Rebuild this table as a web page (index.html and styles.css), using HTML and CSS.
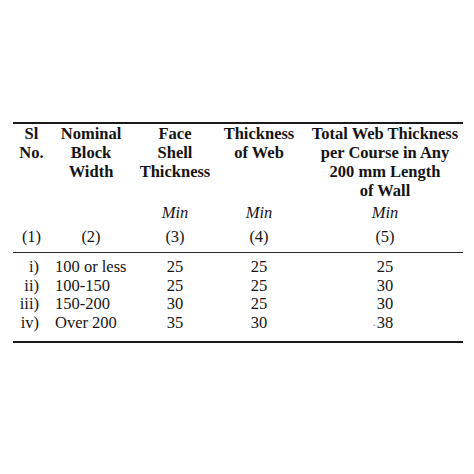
FILE: index.html
```html
<!DOCTYPE html>
<html lang="en">
<head>
<meta charset="utf-8">
<title>Block dimensions</title>
<link rel="stylesheet" href="styles.css">
</head>
<body>
<table class="spec">
  <colgroup>
    <col class="c1"><col class="c2"><col class="c3"><col class="c4"><col class="c5">
  </colgroup>
  <thead>
    <tr class="head">
      <th>Sl<br>No.</th>
      <th>Nominal<br>Block<br>Width</th>
      <th>Face<br>Shell<br>Thickness</th>
      <th>Thickness<br>of Web</th>
      <th class="last">Total Web Thickness<br>per Course in Any<br>200 mm Length<br>of Wall</th>
    </tr>
    <tr class="min">
      <td></td>
      <td></td>
      <td>Min</td>
      <td>Min</td>
      <td class="last">Min</td>
    </tr>
    <tr class="nums">
      <td>(1)</td>
      <td>(2)</td>
      <td>(3)</td>
      <td>(4)</td>
      <td class="last">(5)</td>
    </tr>
  </thead>
  <tbody>
    <tr class="first">
      <td class="sl">i)</td><td class="width">100 or less</td><td>25</td><td>25</td><td class="last">25</td>
    </tr>
    <tr>
      <td class="sl">ii)</td><td class="width">100-150</td><td>25</td><td>25</td><td class="last">30</td>
    </tr>
    <tr>
      <td class="sl">iii)</td><td class="width">150-200</td><td>30</td><td>25</td><td class="last">30</td>
    </tr>
    <tr class="final">
      <td class="sl">iv)</td><td class="width">Over 200</td><td>35</td><td>30</td><td class="last"><span class="val">38<span class="speck">.</span></span></td>
    </tr>
  </tbody>
</table>
</body>
</html>
```

FILE: styles.css
```css
html, body {
  margin: 0;
  padding: 0;
  background: #ffffff;
}

body {
  font-family: "Liberation Serif", "Times New Roman", serif;
  font-size: 16.5px;
  color: #141414;
}

.spec {
  margin: 122px 0 0 13px;
  width: 450px;
  table-layout: fixed;
  border-collapse: separate;
  border-spacing: 0;
  border-top: 2px solid #1a1a1a;
  border-bottom: 2px solid #1a1a1a;
}

.c1 { width: 37px; }
.c2 { width: 82px; }
.c3 { width: 86px; }
.c4 { width: 82px; }
.c5 { width: 163px; }

.spec th,
.spec td {
  padding: 0;
  text-align: center;
  vertical-align: top;
  white-space: nowrap;
}

.spec .last {
  padding-left: 7px;
}

.head th {
  font-weight: bold;
  line-height: 19px;
}

.min td {
  font-style: italic;
  line-height: 19px;
  padding-top: 3px;
}

.nums td {
  line-height: 19px;
  padding-top: 5px;
  padding-bottom: 6px;
  border-bottom: 1px solid #2a2a2a;
}

.spec tbody td {
  line-height: 18.6px;
}

.spec tbody .first td {
  padding-top: 5px;
}

.spec tbody .final td {
  padding-bottom: 9px;
}

.spec tbody td.sl {
  text-align: right;
  padding-right: 11px;
}

.spec tbody td.width {
  text-align: left;
  padding-left: 5px;
}

.val {
  position: relative;
}

.speck {
  position: absolute;
  left: -4px;
  top: 0;
  color: #9a9a9a;
  font-size: 12px;
}
```
